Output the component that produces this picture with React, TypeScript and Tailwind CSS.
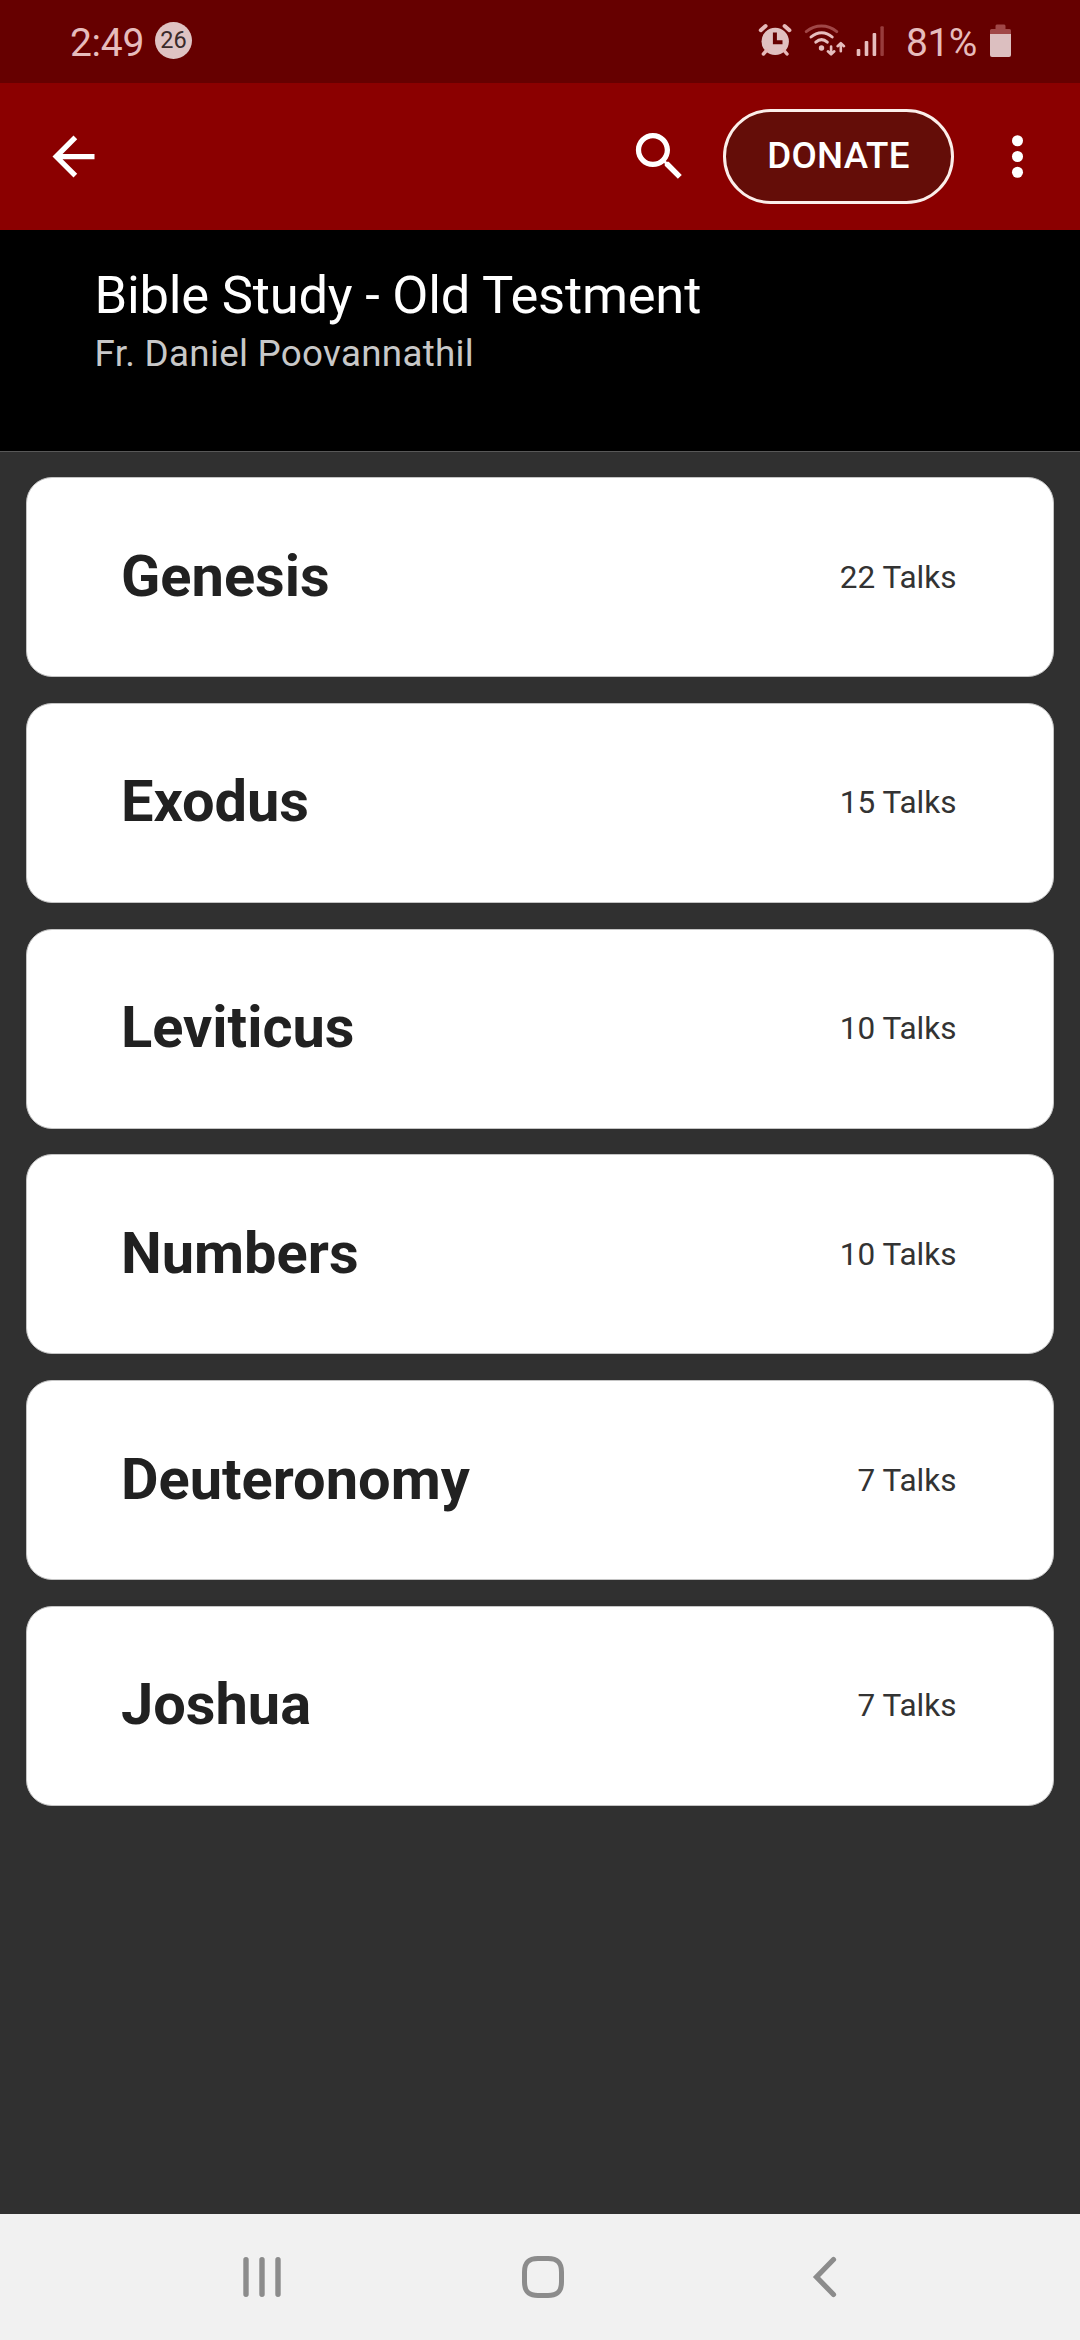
import React from "react";

const books = [
  { name: "Genesis", talks: 22 },
  { name: "Exodus", talks: 15 },
  { name: "Leviticus", talks: 10 },
  { name: "Numbers", talks: 10 },
  { name: "Deuteronomy", talks: 7 },
  { name: "Joshua", talks: 7 },
];

function AlarmIcon() {
  return (
    <svg width="34" height="34" viewBox="0 0 34 34" className="shrink-0" fill="none">
      <circle cx="17.2" cy="18.4" r="13.7" fill="#e0c0c0" />
      <path d="M2.8 7.2 7.6 3M31.4 7.2 26.6 3" stroke="#e6b9b9" strokeWidth="4" strokeLinecap="round" />
      <path d="M8.5 27.5 5.4 31M26 27.5l3 3.5" stroke="#e6b9b9" strokeWidth="3.4" strokeLinecap="round" />
      <path d="M16.9 9.4v9.9h7.6" stroke="#660000" strokeWidth="4" />
    </svg>
  );
}

function WifiIcon() {
  return (
    <svg width="42" height="34" viewBox="0 0 42 34" className="shrink-0" fill="none" stroke="#e6bdbd" strokeLinecap="round" strokeLinejoin="round">
      <path d="M2.200 8.600C11.500 1.200 23.500 1.200 32.800 8.600" stroke="#a04747" strokeWidth="2.900" />
      <path d="M7 14C13.500 8.200 21.800 8.200 28.200 14" strokeWidth="3" />
      <path d="M11.800 19.200C15.500 15.800 19.600 15.800 23.300 19.200" strokeWidth="3" />
      <circle cx="17.500" cy="25" r="2.700" fill="#e6bdbd" stroke="none" />
      <path d="M27.100 23.500v7.500M23.900 28.300l3.200 3.100 3.200-3.100M36.800 28.200v-7.700M33.600 23.200l3.200-3.100 3.200 3.100" strokeWidth="2.600" />
    </svg>
  );
}

function SignalIcon() {
  return (
    <svg width="28" height="34" viewBox="0 0 28 34" className="shrink-0">
      <rect x="0.700" y="26" width="3.600" height="7" rx="1" fill="#e6bdbd" />
      <rect x="8.700" y="18" width="3.600" height="15" rx="1" fill="#e6bdbd" />
      <rect x="16.600" y="10" width="3.600" height="23" rx="1" fill="#e6bdbd" />
      <rect x="24.400" y="3.200" width="3.400" height="29.800" rx="1" fill="#983c3c" />
    </svg>
  );
}

function BatteryIcon() {
  return (
    <svg width="21" height="34" viewBox="0 0 21 34" className="shrink-0">
      <path d="M0 11V7.500q0-1.500 1.500-1.500H5.500V3q0-1.500 1.300-1.500h7.400q1.300 0 1.300 1.500v3h4q1.500 0 1.500 1.500V11z" fill="#a04747" />
      <path d="M0 11h21v21q0 2-2 2H2q-2 0-2-2z" fill="#dcbfc0" />
    </svg>
  );
}

function StatusBar() {
  return (
    <div className="flex h-[83px] items-start bg-[#660000] pl-[70px] pr-[69px] pt-[22px] text-[#e6bcbc]">
      <div className="mt-[2px] h-[38px] w-[85px] text-[39px] leading-[38px] tracking-[-0.300px]">2:49</div>
      <div className="flex size-[37px] items-center justify-center rounded-full bg-[#dfc3c3] text-[23.500px] leading-none text-[#3a2a2a]">
        26
      </div>
      <div className="ml-auto flex items-start">
        <div className="mt-[1px] flex">
          <AlarmIcon />
          <div className="ml-[12px] flex"><WifiIcon /></div>
          <div className="ml-[10px] flex"><SignalIcon /></div>
        </div>
        <div className="ml-[22px] mt-[2px] w-[84px] whitespace-nowrap text-[39px] leading-[38px] tracking-[-0.500px]">81%</div>
        <div className="mt-[1px] flex"><BatteryIcon /></div>
      </div>
    </div>
  );
}

function AppBar() {
  return (
    <div className="flex h-[147px] items-center bg-[#8b0000] pl-[42px] pr-[31px] text-white">
      <svg width="63" height="63" viewBox="0 0 24 24" fill="currentColor">
        <path d="M20 11H7.830l5.590-5.590L12 4l-8 8 8 8 1.410-1.410L7.830 13H20v-2z" />
      </svg>
      <svg className="ml-auto" width="63" height="63" viewBox="0 0 24 24" fill="currentColor">
        <path d="M15.500 14h-.79l-.28-.27C15.410 12.590 16 11.110 16 9.500 16 5.910 13.090 3 9.500 3S3 5.910 3 9.500 5.910 16 9.500 16c1.610 0 3.090-.59 4.230-1.570l.27.28v.79l5 4.990L20.490 19l-4.990-5zm-6 0C7.010 14 5 11.990 5 9.500S7.010 5 9.500 5 14 7.010 14 9.500 11.990 14 9.500 14z" />
      </svg>
      <button className="ml-[32px] flex h-[95px] w-[231px] items-center justify-center rounded-[47.500px] border-[3px] border-[#fbeeea] bg-[#640d08] text-[36.750px] font-medium leading-none tracking-[0.250px]">
        DONATE
      </button>
      <svg className="ml-[32px]" width="63" height="63" viewBox="0 0 24 24" fill="currentColor">
        <circle cx="12" cy="6" r="2.100" />
        <circle cx="12" cy="12" r="2.100" />
        <circle cx="12" cy="18" r="2.100" />
      </svg>
    </div>
  );
}

function NavBar() {
  return (
    <div className="flex h-[126px] items-center bg-[#f1f1f1] pl-[241px]">
      <svg width="42" height="42" viewBox="0 0 42 42" stroke="#8c8c8c" strokeWidth="5.400" strokeLinecap="round">
        <path d="M5 3.700v34.600M21 3.700v34.600M37 3.700v34.600" />
      </svg>
      <svg className="ml-[239px]" width="42" height="42" viewBox="0 0 42 42" fill="none" stroke="#8c8c8c" strokeWidth="5">
        <path d="M21 2.500h5C35.500 2.500 39.500 6.500 39.500 16v10C39.500 35.500 35.500 39.500 26 39.500H16C6.500 39.500 2.500 35.500 2.500 26V16C2.500 6.500 6.500 2.500 16 2.500z" />
      </svg>
      <svg className="ml-[246px]" width="28" height="42" viewBox="0 0 28 42" fill="none" stroke="#8c8c8c" strokeWidth="5.200" strokeLinecap="round">
        <path d="M23.500 3.500 6.500 21l17 17.500" />
      </svg>
    </div>
  );
}

export default function App() {
  return (
    <div className="flex h-[2340px] w-[1080px] flex-col overflow-hidden bg-[#303030] font-['Roboto',sans-serif]">
      <StatusBar />
      <AppBar />
      <header className="h-[222px] border-b border-[#585858] bg-black pl-[94.500px] pt-[34px]">
        <h1 className="text-[52.500px] leading-[62px] tracking-[-0.220px] text-white">Bible Study - Old Testment</h1>
        <p className="mt-[6px] text-[36.750px] leading-[44px] tracking-[0.300px] text-[#c8c8c8]">Fr. Daniel Poovannathil</p>
      </header>
      <main className="flex flex-1 flex-col gap-[25.750px] px-[26px] pt-[25px]">
        {books.map((book) => (
          <section
            key={book.name}
            className="flex h-[200px] shrink-0 items-center justify-between rounded-[26px] border border-[#c4c4c4] bg-white pl-[94px] pr-[96.500px]"
          >
            <h2 className="pb-[3px] text-[57.750px] font-bold leading-[68px] text-[#212121]">{book.name}</h2>
            <span className="pt-[1px] text-[31.500px] leading-[38px] text-[#333333]">{book.talks} Talks</span>
          </section>
        ))}
      </main>
      <NavBar />
    </div>
  );
}
